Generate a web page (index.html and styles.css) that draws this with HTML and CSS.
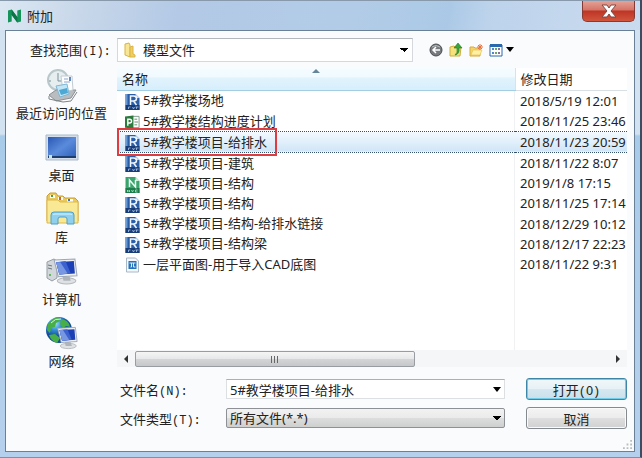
FILE: index.html
```html
<!DOCTYPE html>
<html lang="zh-CN">
<head>
    <meta charset="UTF-8">
    <meta name="viewport" content="width=device-width, initial-scale=1.0">
    <title>附加</title>
    <link rel="stylesheet" href="styles.css">
</head>
<body>
    <!-- file type icons used by the list -->
    <svg class="sprite" aria-hidden="true">
        <symbol id="rvt" viewBox="0 0 14 16">
            <path d="M0 0h10l4 4v12H0z" fill="#2a5ea6"/>
            <path d="M10 0l4 4h-4z" fill="#c3d8f0"/>
            <path d="M0 0h2v11H0z" fill="#6d9bd4"/>
            <path d="M0 11h14v5H0z" fill="#173c78"/>
            <path d="M5 11V2h3q3 0 3 2.500t-3 2.500H5M8 7l3 4" fill="none" stroke="#f2f7ff" stroke-width="1.5"/>
            <path d="M3 15v-2h2M7 13l1 2 1-2M10 13h3M11 13v2" fill="none" stroke="#a9c4e8" stroke-width=".8"/>
        </symbol>
        <symbol id="nwc" viewBox="0 0 14 16">
            <path d="M0 0h10l4 4v12H0z" fill="#3aa56c"/>
            <path d="M10 0l4 4h-4z" fill="#d1eedc"/>
            <path d="M0 11h14v5H0z" fill="#1c7c4a"/>
            <path d="M4 10V3l6 7V3" fill="none" stroke="#f0fff5" stroke-width="1.5"/>
            <path d="M2 15v-2l2 2v-2M6 13l1 2 1-2M12 13h-2v2h2" fill="none" stroke="#b4e2c7" stroke-width=".8"/>
        </symbol>
        <symbol id="mpp" viewBox="0 0 16 16">
            <path d="M7 2h8v12H7z" fill="#fff" stroke="#7f9c88"/>
            <path d="M10 5h3M10 8h4M10 11h3" stroke="#5a8f6c"/>
            <path d="M0 2l9-1v14l-9-1z" fill="#2c7a3c"/>
            <path d="M3 12V5h2q2 0 2 2t-2 2H3" fill="none" stroke="#fff" stroke-width="1.5"/>
        </symbol>
        <symbol id="dwg" viewBox="0 0 14 16">
            <path d="M1 1h9l3 3v11H1z" fill="#f4f8fc" stroke="#a9b8c6"/>
            <path d="M3 4h8v8H3z" fill="#2473bd"/>
            <path d="M4 6h6M5 10h1V6M8 6v4h2" fill="none" stroke="#dcecfa"/>
        </symbol>
        <symbol id="monitor" viewBox="0 0 26 26">
            <ellipse cx="15" cy="22" rx="9" ry="3" fill="#dfe2e4" stroke="#b4b8bc"/>
            <path d="M11 17l7 1 1 4h-7z" fill="#aeb4ba"/>
            <path d="M3 2l20-1 2 16-18 1z" fill="#edf1f4" stroke="#9ba6b4"/>
            <path d="M5 4l17-1 1 12-15 1z" fill="#1d3fb5"/>
            <path d="M5 4l9-1 5 12-11 1z" fill="#3b62cf"/>
            <path d="M5 4l4 0 7 11-8 1z" fill="#7897e2"/>
        </symbol>
    </svg>

    <div class="dialog">
        <header class="titlebar">
            <svg class="app-icon" viewBox="0 0 14 14"><path d="M0 14V1l4-1 6 8V1l4-1v13l-4 1-6-8v7z" fill="#14935a"/><path d="M4 0l6 8v6L4 6z" fill="#0b7546"/></svg>
            <h1>附加</h1>
            <button class="close" type="button" aria-label="关闭">
                <svg viewBox="0 0 16 14"><path d="M1 1h5l2 3 2-3h5l-5 6 5 6h-5l-2-3-2 3H1l5-6z" fill="#fff" stroke="#7d4a46"/></svg>
            </button>
        </header>

        <main class="client">
            <div class="lookin">
                <label for="folder">查找范围<span class="mono">(I):</span></label>
                <div class="combo">
                    <svg class="folder-icon" viewBox="0 0 14 16"><path d="M2 2l4-1 1 2v12l-5-2z" fill="#f8e695" stroke="#d6b445"/><path d="M7 5l3-1v8l2 1v2H7z" fill="#f1cf5d" stroke="#dab44a"/></svg>
                    <select id="folder">
                        <option>模型文件</option>
                    </select>
                </div>
                <div class="tools">
                    <button type="button" aria-label="后退"><svg viewBox="0 0 14 14"><circle cx="7" cy="7" r="6" fill="#777b7f" stroke="#4a4d50"/><path d="M3 4q4-3 8 0" stroke="#b9bcbe" fill="none"/><path d="M11 7H4M7 4L4 7l3 3" fill="none" stroke="#fff" stroke-width="1.5"/></svg></button>
                    <button type="button" aria-label="向上一级"><svg viewBox="0 0 14 14"><path d="M1 4l4-1 1 1h6l-1 9H1z" fill="#f6e27c" stroke="#d0ae3e"/><path d="M6 12q3-2 2-7H5l4-5 4 5h-3q1 6-4 7z" fill="#35a53c" stroke="#1d7a29" stroke-width=".6"/></svg></button>
                    <button type="button" aria-label="新建文件夹"><svg viewBox="0 0 14 14"><path d="M1 4h4l1 1h5v8H1z" fill="#f3d468" stroke="#d6ac3c"/><path d="M2 12l2-5h9l-2 5z" fill="#fff0a2" stroke="#e0bd55" stroke-width=".6"/><path d="M11 1v6M8 4h6M9 2l4 4M13 2L9 6" stroke="#e8713c"/></svg></button>
                    <button class="view" type="button" aria-label="视图"><svg viewBox="0 0 14 14"><path d="M1 2h12v11H1z" fill="#fff" stroke="#2a68ae"/><path d="M1 1h12v3H1z" fill="#2a68ae"/><path d="M3 6h2M3 10h2" stroke="#4a88cf" stroke-width="2"/><path d="M6 6h2M6 10h2" stroke="#63a968" stroke-width="2"/><path d="M9 6h2M9 10h2" stroke="#8b6a9c" stroke-width="2"/></svg><span class="arrow"></span></button>
                </div>
            </div>

            <nav class="places">
                <a href="#">
                    <svg viewBox="0 0 36 36">
                        <circle cx="14" cy="12" r="10" fill="#e6eef0" stroke="#b9c7cb" stroke-width="2"/>
                        <path d="M14 5v8h5M14 20v2M5 13h2" fill="none" stroke="#7b9198"/>
                        <path d="M5 27l7-5h20l-5 8-15 3z" fill="#b9bdbf" stroke="#8b9093"/>
                        <path d="M5 28v3l14 3 8-1 6-9" fill="none" stroke="#7e8589"/>
                        <path d="M17 8h11l1 14-10 2z" fill="#fcfdfe" stroke="#c4ccd2"/>
                        <path d="M20 11h4M20 14h6" stroke="#8fa5cc"/><path d="M25 9h2v4h-2z" fill="#5f86c9"/>
                        <path d="M12 18l11-2 2 10-9 3z" fill="#c0e6f7" stroke="#81b7d4"/>
                        <path d="M15 22l8-2 1 5-7 2z" fill="#4ea8d4"/>
                    </svg>
                    <span>最近访问的位置</span>
                </a>
                <a href="#">
                    <svg viewBox="0 0 36 36">
                        <defs><linearGradient id="desk" x2="1" y2="1"><stop stop-color="#2a58b4"/><stop offset=".5" stop-color="#5a8bdb"/><stop offset="1" stop-color="#2d5fb8"/></linearGradient></defs>
                        <path d="M2 5h32v25H2z" fill="#d4dfeb" stroke="#a9bacb"/>
                        <path d="M4 7h28v21H4z" fill="url(#desk)"/>
                        <path d="M4 26h28v2H4z" fill="#1e3f6e"/><path d="M5 25h3v3H5z" fill="#c6e7e6"/>
                    </svg>
                    <span>桌面</span>
                </a>
                <a href="#">
                    <svg viewBox="0 0 36 36">
                        <path d="M3 4l3-3h6l2 3h5l2 2h10l3 3v20H3z" fill="#e9c95c" stroke="#c99f38"/>
                        <path d="M6 3h5v3H6zM14 5h5v3h-5zM23 7h6v3h-6z" fill="#fff"/>
                        <path d="M7 3h2v2H7z" fill="#3f9e58"/><path d="M15 5h2v3h-2z" fill="#cf6040"/><path d="M24 7h2v2h-2z" fill="#3d76bb"/>
                        <path d="M3 8h11l2 2h18v21H3z" fill="#fae994" stroke="#dcb84b"/>
                        <path d="M7 32V23q0-3 3-3h17q3 0 3 3v9h-7v-5q0-2-2-2h-5q-2 0-2 2v5z" fill="#8fd0ef" stroke="#4f9fc8"/>
                        <path d="M9 23q0-1 2-1h15q2 0 2 1" fill="none" stroke="#d8f3ff"/>
                    </svg>
                    <span>库</span>
                </a>
                <a href="#">
                    <svg viewBox="0 0 36 36">
                        <path d="M3 8l7-3 3 2v17l-5 3-5-3z" fill="#d2d7db" stroke="#969da3"/>
                        <path d="M4 11l4 1M4 14l4 1" stroke="#6d757b"/><path d="M5 20h2v2H5z" fill="#62b95f"/>
                        <use href="#monitor" x="7" y="3" width="27" height="29"/>
                    </svg>
                    <span>计算机</span>
                </a>
                <a href="#">
                    <svg viewBox="0 0 36 36">
                        <defs><radialGradient id="globe" cx=".35" cy=".25"><stop stop-color="#a5e4fa"/><stop offset=".5" stop-color="#338fd6"/><stop offset="1" stop-color="#124c9c"/></radialGradient></defs>
                        <circle cx="15" cy="14" r="13" fill="url(#globe)"/>
                        <path d="M4 8q4-6 10-7l2 4-4 2-1 4-4 1-1 5-3-3zM17 3q8 1 9 8l-4-1-3 2-3-4zM5 19l6-1 5 4-3 5q-6-2-8-8z" fill="#48ae46"/>
                        <path d="M7 7q4-5 10-4" fill="none" stroke="#d9f8e0"/>
                        <use href="#monitor" x="11" y="9" width="23" height="26"/>
                    </svg>
                    <span>网络</span>
                </a>
            </nav>

            <section class="files">
                <div class="list">
                    <table>
                        <thead>
                            <tr><th class="name sorted">名称</th><th class="date">修改日期</th></tr>
                        </thead>
                        <tbody>
                            <tr><td><svg><use href="#rvt"/></svg>5#教学楼场地</td><td>2018/5/19 12:01</td></tr>
                            <tr><td><svg><use href="#mpp"/></svg>5#教学楼结构进度计划</td><td>2018/11/25 23:46</td></tr>
                            <tr class="selected"><td><svg><use href="#rvt"/></svg>5#教学楼项目-给排水<span class="marker"></span></td><td>2018/11/23 20:59</td></tr>
                            <tr><td><svg><use href="#rvt"/></svg>5#教学楼项目-建筑</td><td>2018/11/22 8:07</td></tr>
                            <tr><td><svg><use href="#nwc"/></svg>5#教学楼项目-结构</td><td>2019/1/8 17:15</td></tr>
                            <tr><td><svg><use href="#rvt"/></svg>5#教学楼项目-结构</td><td>2018/11/25 17:14</td></tr>
                            <tr><td><svg><use href="#rvt"/></svg>5#教学楼项目-结构-给排水链接</td><td>2018/12/29 10:12</td></tr>
                            <tr><td><svg><use href="#rvt"/></svg>5#教学楼项目-结构梁</td><td>2018/12/17 22:23</td></tr>
                            <tr><td><svg><use href="#dwg"/></svg>一层平面图-用于导入CAD底图</td><td>2018/11/22 9:31</td></tr>
                        </tbody>
                    </table>
                </div>
                <div class="scrollbar">
                    <button class="left" type="button" aria-label="向左滚动"></button>
                    <div class="track"><div class="thumb"><i></i><i></i><i></i></div></div>
                    <button class="right" type="button" aria-label="向右滚动"></button>
                </div>

                <form class="fields">
                    <label for="filename">文件名<span class="mono">(N):</span></label>
                    <div class="combo">
                        <input id="filename" type="text" value="5#教学楼项目-给排水">
                        <button class="drop" type="button" aria-label="最近的文件"><span class="arrow"></span></button>
                    </div>
                    <button class="btn default" type="button">打开<span class="mono">(O)</span></button>

                    <label for="filetype">文件类型<span class="mono">(T):</span></label>
                    <select id="filetype">
                        <option>所有文件(*.*)</option>
                    </select>
                    <button class="btn" type="button">取消</button>
                </form>
            </section>
            <svg class="grip" viewBox="0 0 10 10"><path d="M8 0h2v2H8zM8 4h2v2H8zM8 8h2v2H8zM4 4h2v2H4zM4 8h2v2H4zM0 8h2v2H0z" fill="#b9bdc1"/></svg>
        </main>
    </div>
</body>
</html>
```

FILE: styles.css
```css
* {
    box-sizing: border-box;
}
body {
    margin: 0;
    font-family: "Noto Sans", "Noto Sans CJK SC", sans-serif;
    font-size: 13px;
    color: #222;
}
button, input, select {
    font: inherit;
    color: inherit;
    margin: 0;
    padding: 0;
}
button {
    border: none;
    background: none;
}
.sprite {
    position: absolute;
    width: 0;
    height: 0;
}
.mono {
    font-family: "Liberation Mono", monospace;
    font-size: 12px;
}
.arrow {
    width: 0;
    border: 4px solid transparent;
    border-top: 5px solid #000;
    border-bottom: none;
}

/* window frame */
.dialog {
    display: flex;
    flex-direction: column;
    min-height: 100vh;
    padding: 0 5px 5px;
    border-right: 2px solid #3b4d60;
    border-bottom: 1px solid #7d91a8;
    background: linear-gradient(#d3e2f0 0, #d3e2f0 134px, #a9cbea 136px, #b5d0ec 100%);
}
.titlebar {
    display: flex;
    align-items: center;
    height: 30px;
    margin: 0 -5px;
    padding: 0 0 0 8px;
    border-top: 1px solid #8799ab;
    background: linear-gradient(100deg, #dbe7f2 0, #c9d8ea 12%, #b3c9e6 28%, #b2cce7 55%, #abc9e6 70%, #bdd3ec 76%, #cadbee 100%);
}
.app-icon {
    width: 13px;
    height: 14px;
}
.titlebar h1 {
    flex: 1;
    margin: 0 0 0 6px;
    font-size: 13px;
    font-weight: normal;
}
.close {
    align-self: flex-start;
    width: 53px;
    height: 21px;
    margin-right: 5px;
    border: 1px solid #843a35;
    border-top: none;
    border-radius: 0 0 5px 5px;
    background: linear-gradient(#e5a297 0, #d47466 45%, #bd3526 50%, #d1553c 100%);
}
.close svg {
    display: block;
    width: 16px;
    height: 14px;
    margin: 0 auto;
}
.client {
    position: relative;
    flex: 1;
    display: grid;
    grid-template-columns: 111px 1fr;
    grid-template-rows: 37px 1fr;
    padding-right: 7px;
    border: 1px solid #6a8096;
    background: #fafbfc;
}

/* folder row */
.lookin {
    grid-column: 1 / 3;
    display: grid;
    grid-template-columns: 111px 1fr 214px;
    align-items: center;
}
.lookin label {
    padding-left: 24px;
}
.combo {
    position: relative;
    display: flex;
}
select {
    width: 100%;
    appearance: none;
    border: 1px solid #d5d9dd;
}
#folder {
    height: 24px;
    padding-left: 25px;
    border-top-color: #b3b8be;
    background: conic-gradient(from -45deg at 50% 100%, #000 90deg, transparent 0) right 4px center / 8px 4px no-repeat #fff;
}
.folder-icon {
    position: absolute;
    left: 6px;
    top: 4px;
    width: 14px;
    height: 16px;
    pointer-events: none;
}
.tools {
    display: flex;
    gap: 6px;
    padding-left: 16px;
}
.tools button {
    display: flex;
    align-items: center;
    gap: 3px;
}
.tools svg {
    width: 14px;
    height: 14px;
}

/* places bar */
.places {
    display: flex;
    flex-direction: column;
    gap: 8px;
}
.places a {
    display: flex;
    flex-direction: column;
    align-items: center;
    line-height: 18px;
    color: #222;
    text-decoration: none;
}
.places svg {
    width: 36px;
    height: 36px;
}

/* file list */
.files {
    display: flex;
    flex-direction: column;
    min-width: 0;
}
.list {
    flex: 1;
    overflow: hidden;
    background: linear-gradient(#f0f1f2, #f0f1f2) right 112px top / 1px 100% no-repeat #fff;
}
table {
    width: 100%;
    height: 206px;
    table-layout: fixed;
    border-collapse: collapse;
    line-height: 18px;
}
th {
    height: 22px;
    padding: 0 0 0 5px;
    text-align: left;
    font-weight: normal;
    border-bottom: 1px solid #d8dfe5;
    background: #fff;
}
.date {
    width: 112px;
    border-left: 1px solid #d5e3ec;
}
.sorted {
    position: relative;
    border-bottom-color: #a3cde3;
    background: linear-gradient(#f6fcff 0, #f0faff 40%, #e2f4fd 45%, #d6eefb 100%);
}
.sorted::before {
    content: "";
    position: absolute;
    left: 50%;
    top: 1px;
    margin-left: -4px;
    border: 4px solid transparent;
    border-top: none;
    border-bottom: 4px solid #658699;
}
td {
    padding: 0 0 0 5px;
    overflow: hidden;
    white-space: nowrap;
}
td:first-child {
    padding-left: 8px;
}
td svg {
    width: 15px;
    height: 16px;
    margin-right: 3px;
    vertical-align: middle;
}
.selected td {
    background: linear-gradient(#f4fafe, #cfe5f7);
    border-top: 1px dotted #34516d;
    border-bottom: 1px dotted #34516d;
}
.selected td:first-child {
    position: relative;
    overflow: visible;
}
.marker {
    position: absolute;
    left: 0;
    top: -4px;
    bottom: -4px;
    width: 160px;
    border: 2px solid #dd3c41;
}

/* scrollbar */
.scrollbar {
    display: flex;
    height: 17px;
    background: #f5f6f7;
}
.scrollbar button {
    width: 18px;
    display: flex;
    align-items: center;
    justify-content: center;
}
.scrollbar button::before {
    content: "";
    border: 4px solid transparent;
}
.scrollbar .left::before {
    border-left: none;
    border-right-color: #333;
}
.scrollbar .right::before {
    border-right: none;
    border-left-color: #333;
}
.track {
    flex: 1;
}
.thumb {
    display: flex;
    align-items: center;
    justify-content: center;
    gap: 2px;
    width: 59%;
    height: 16px;
    margin-top: 1px;
    border: 1px solid #999da1;
    border-radius: 2px;
    background: linear-gradient(#f5f5f5 0, #e7e8e9 48%, #d3d5d7 52%, #c5c7ca 100%);
}
.thumb i {
    width: 1px;
    height: 7px;
    background: #666;
}

/* name, type and buttons */
.fields {
    display: grid;
    grid-template-columns: 109px 1fr 101px;
    grid-template-rows: 22px 22px;
    row-gap: 7px;
    align-items: center;
    padding: 11px 0 22px;
}
.fields label {
    padding-left: 3px;
}
.fields .combo, #filetype {
    width: auto;
    height: 20px;
    margin-right: 21px;
}
.fields .combo {
    border: 1px solid #dde0e3;
    border-top-color: #abb0b5;
    background: #fff;
}
#filename {
    flex: 1;
    min-width: 0;
    padding-left: 3px;
    border: none;
    outline: none;
    background: none;
}
.drop {
    display: flex;
    align-items: center;
    padding-right: 3px;
}
#filetype {
    padding-left: 3px;
    line-height: 18px;
    border-color: #8d9196;
    border-radius: 2px;
    background:
        conic-gradient(from -45deg at 50% 100%, #000 90deg, transparent 0) right 3px center / 8px 4px no-repeat,
        linear-gradient(#f2f2f2 0, #ebebeb 48%, #dcdddd 52%, #cfcfcf 100%);
}
.btn {
    height: 22px;
    border: 1px solid #858a8f;
    border-radius: 3px;
    background: linear-gradient(#f4f4f4 0, #ececec 48%, #dedede 52%, #d0d1d2 100%);
    box-shadow: inset 0 0 0 1px #fafafa;
}
.default {
    border-color: #3d86a8;
    background: linear-gradient(#f1f7fa 0, #e7f1f6 48%, #d5e8f1 52%, #cbdfeb 100%);
    box-shadow: inset 0 0 0 1px #6fcdea;
}
.grip {
    position: absolute;
    right: 2px;
    bottom: 2px;
    width: 9px;
    height: 9px;
}
```
